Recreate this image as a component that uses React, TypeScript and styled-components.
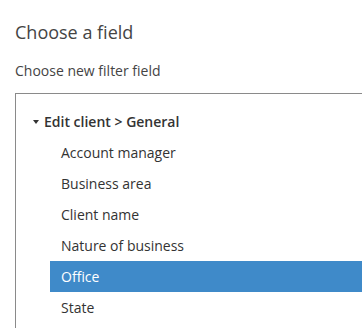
import React from "react";
import styled, { createGlobalStyle } from "styled-components";

const Global = createGlobalStyle`
  html, body { margin: 0; padding: 0; background: #fff; overflow: hidden; }
  body { font-family: "Open Sans", "Liberation Sans", sans-serif; }
`;

const Page = styled.div`
  padding: 20px 0 0 15px;
  width: 400px;
`;

const Title = styled.h1`
  margin: 0;
  font-size: 18px;
  line-height: 24px;
  font-weight: 400;
  color: #444;
`;

const Subtitle = styled.div`
  margin-top: 17px;
  font-size: 14px;
  line-height: 20px;
  color: #444;
`;

const Box = styled.div`
  margin-top: 12px;
  border: 1px solid #8a8a8a;
  width: 380px;
  height: 300px;
  padding-top: 12px;
  box-sizing: border-box;
`;

const GroupHeader = styled.div`
  display: flex;
  align-items: center;
  height: 31px;
  padding-left: 17px;
  gap: 5px;
  font-size: 14px;
  font-weight: 600;
  color: #333;
`;

const Caret = styled.span`
  width: 0;
  height: 0;
  border-left: 3.5px solid transparent;
  border-right: 3.5px solid transparent;
  border-top: 4px solid #333;
  margin-top: 1px;
`;

const List = styled.div`
  margin-left: 34px;
`;

const Item = styled.div<{ $selected?: boolean }>`
  height: 31px;
  display: flex;
  align-items: center;
  padding-left: 11px;
  font-size: 14px;
  color: ${(p) => (p.$selected ? "#fff" : "#333")};
  background: ${(p) => (p.$selected ? "#3f8ac9" : "transparent")};
`;

const items = [
  "Account manager",
  "Business area",
  "Client name",
  "Nature of business",
  "Office",
  "State",
];

export default function App() {
  return (
    <>
      <Global />
      <Page>
        <Title>Choose a field</Title>
        <Subtitle>Choose new filter field</Subtitle>
        <Box>
          <GroupHeader>
            <Caret />
            <span>Edit client &gt; General</span>
          </GroupHeader>
          <List>
            {items.map((it) => (
              <Item key={it} $selected={it === "Office"}>
                {it}
              </Item>
            ))}
          </List>
        </Box>
      </Page>
    </>
  );
}
